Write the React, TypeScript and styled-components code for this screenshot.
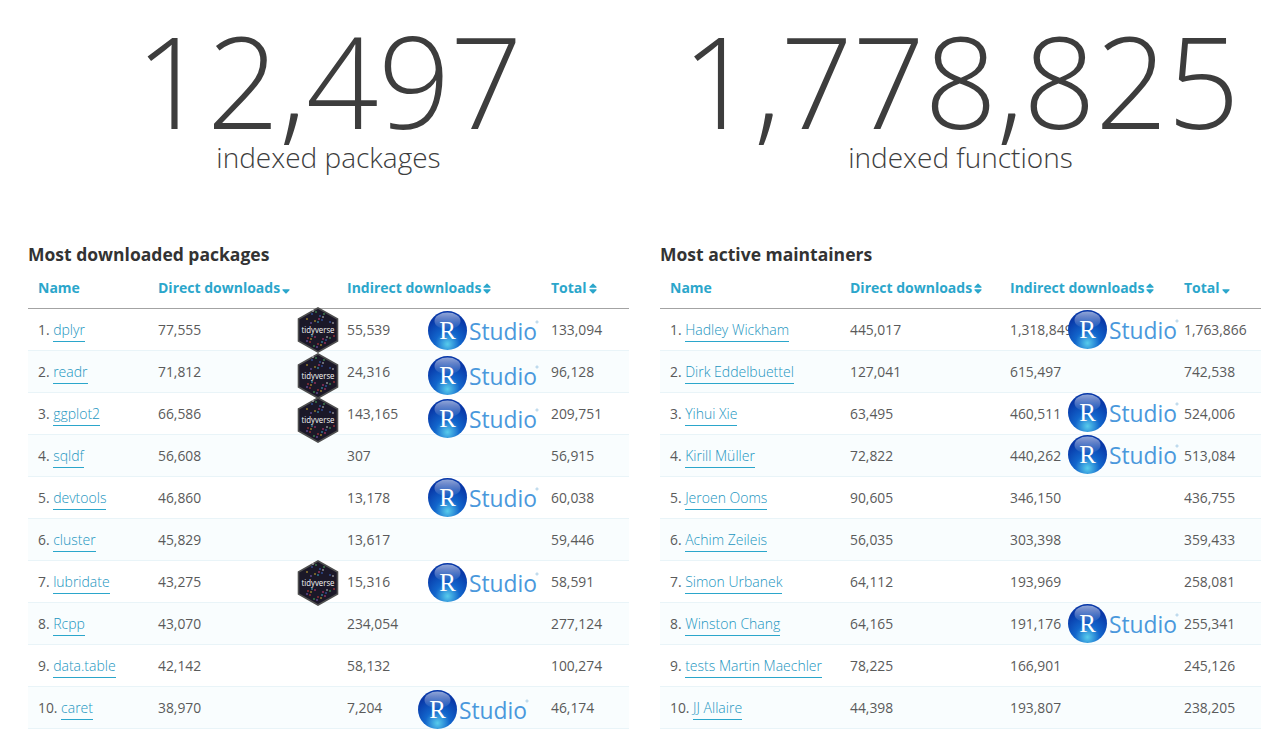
import React from "react";
import styled, {createGlobalStyle} from "styled-components";
import {FaSort, FaSortDown} from "react-icons/fa";

const GlobalStyle = createGlobalStyle`
  body {
    margin: 0;
    background: #fff;
    font-family: "Open Sans", "Liberation Sans", sans-serif;
    color: #555;
  }
`

const Page = styled.div`
  width: 1269px;
  height: 735px;
  overflow: hidden;
  padding: 0 8px 0 28px;
  box-sizing: border-box;
`

const Columns = styled.div`
  display: grid;
  grid-template-columns: 601px 601px;
  column-gap: 31px;
`

const Stat = styled.div`
  height: 242px;
  text-align: center;
  color: #3d3d3d;
  font-weight: 300;
`

const Big = styled.div`
  font-size: 127px;
  line-height: 127px;
  padding-top: 16px;
  letter-spacing: -.5px;
`

const Caption = styled.div`
  font-size: 28px;
  line-height: 38px;
  margin-top: -5px;
`

const Title = styled.h2`
  margin: 0 0 8px;
  font-size: 17.5px;
  line-height: 24px;
  font-weight: 700;
  color: #333;
`

const Table = styled.table`
  width: 601px;
  table-layout: fixed;
  border-collapse: collapse;
  font-size: 14px;
`

const Col = styled.col<{ $w: number }>`
  width: ${p => p.$w}px;
`

const Th = styled.th`
  height: 34px;
  padding: 4px 0 0 10px;
  box-sizing: border-box;
  text-align: left;
  font-size: 14px;
  font-weight: 700;
  color: #2ba6cb;
  border-bottom: 1px solid #a3a3a3;
  white-space: nowrap;
  vertical-align: top;

  svg {
    width: 10px;
    height: 13px;
    margin-left: 1px;
    vertical-align: -2px;
  }
`

const Row = styled.tr<{ $even: boolean }>`
  height: 42px;
  background: ${p => p.$even ? "#f9fdfe" : "#fff"};
  border-bottom: 1px solid #e9f4f8;
`

const Td = styled.td`
  position: relative;
  padding: 0 0 0 10px;
  font-size: 13.85px;
  white-space: nowrap;
  color: #5a5a5a;
`

const PackageLink = styled.a`
  color: #2295c0;
  font-size: 14px;
  font-weight: 300;
  text-decoration: none;
  border-bottom: 1px solid #2ba6cb;
  padding-bottom: 2px;
`

const Overlay = styled.svg<{ $left: number, $top: number }>`
  position: absolute;
  left: ${p => p.$left}px;
  top: ${p => p.$top}px;
  z-index: 1;
`

const RStudio = ({left, top}: { left: number, top: number }) => (
    <Overlay $left={left} $top={top} width="112" height="40" viewBox="0 0 112 40">
        <defs>
            <radialGradient id="ball" cx="50%" cy="85%" r="70%">
                <stop offset="0" stopColor="#58ccec"/>
                <stop offset=".45" stopColor="#1266cc"/>
                <stop offset="1" stopColor="#0838a8"/>
            </radialGradient>
            <linearGradient id="shine" x1="0" y1="0" x2="0" y2="1">
                <stop offset="0" stopColor="#fff" stopOpacity=".55"/>
                <stop offset="1" stopColor="#fff" stopOpacity=".02"/>
            </linearGradient>
        </defs>
        <circle cx="19.5" cy="19.5" r="19.5" fill="url(#ball)"/>
        <ellipse cx="19.5" cy="10" rx="13" ry="8.5" fill="url(#shine)"/>
        <text x="19.5" y="28" textAnchor="middle" fontFamily="Liberation Serif" fontSize="25" fill="#fff">R</text>
        <text x="41" y="29" fontFamily="Open Sans" fontSize="24" textLength="68" lengthAdjust="spacingAndGlyphs" fill="#4a98dc">Studio</text>
        <circle cx="109" cy="11" r="1.1" fill="none" stroke="#8fbfe0" strokeWidth=".7"/>
    </Overlay>
)

const hexColours = ["#e2407f", "#3fb6dd", "#e6c02f", "#e23f3f", "#8a66d0", "#4fc065", "#d8d8d8", "#3f70d8"]

// fixed scatter of coloured specks
const specks = Array.from({length: 70}, (_, i) => {
    const x = 4 + (i * 37) % 34
    const y = 4 + (i * 23) % 38
    return {x, y, c: hexColours[i % hexColours.length]}
}).filter(({x, y}) => Math.abs(x - 21) / 19 + Math.abs(y - 23) / 22 < 1.15 && (y < 17 || y > 28))

const Tidyverse = ({left, top}: { left: number, top: number }) => (
    <Overlay $left={left} $top={top} width="42" height="46" viewBox="0 0 42 46">
        <polygon points="21,1 40.5,12 40.5,34 21,45 1.5,34 1.5,12" fill="#1b1828" stroke="#4e4e4e" strokeWidth="1.6"/>
        {specks.map(({x, y, c}, i) => <circle key={i} cx={x} cy={y} r=".8" fill={c}/>)}
        <text x="21" y="26" textAnchor="middle" fontFamily="Open Sans" fontSize="9" textLength="33" lengthAdjust="spacingAndGlyphs" fill="#f6f6f6">tidyverse</text>
    </Overlay>
)

interface IEntry {
    name: string,
    direct: string,
    indirect: string,
    total: string,
    hexTop?: number,
    logo?: [number, number],
}

const packages: IEntry[] = [
    {name: "dplyr", direct: "77,555", indirect: "55,539", total: "133,094", hexTop: -2, logo: [91, 2]},
    {name: "readr", direct: "71,812", indirect: "24,316", total: "96,128", hexTop: 2, logo: [91, 5]},
    {name: "ggplot2", direct: "66,586", indirect: "143,165", total: "209,751", hexTop: 4, logo: [91, 6]},
    {name: "sqldf", direct: "56,608", indirect: "307", total: "56,915"},
    {name: "devtools", direct: "46,860", indirect: "13,178", total: "60,038", logo: [91, 1]},
    {name: "cluster", direct: "45,829", indirect: "13,617", total: "59,446"},
    {name: "lubridate", direct: "43,275", indirect: "15,316", total: "58,591", hexTop: -1, logo: [91, 2]},
    {name: "Rcpp", direct: "43,070", indirect: "234,054", total: "277,124"},
    {name: "data.table", direct: "42,142", indirect: "58,132", total: "100,274"},
    {name: "caret", direct: "38,970", indirect: "7,204", total: "46,174", logo: [81, 3]},
]

const maintainers: IEntry[] = [
    {name: "Hadley Wickham", direct: "445,017", indirect: "1,318,849", total: "1,763,866", logo: [68, 1]},
    {name: "Dirk Eddelbuettel", direct: "127,041", indirect: "615,497", total: "742,538"},
    {name: "Yihui Xie", direct: "63,495", indirect: "460,511", total: "524,006", logo: [68, 0]},
    {name: "Kirill Müller", direct: "72,822", indirect: "440,262", total: "513,084", logo: [68, 0]},
    {name: "Jeroen Ooms", direct: "90,605", indirect: "346,150", total: "436,755"},
    {name: "Achim Zeileis", direct: "56,035", indirect: "303,398", total: "359,433"},
    {name: "Simon Urbanek", direct: "64,112", indirect: "193,969", total: "258,081"},
    {name: "Winston Chang", direct: "64,165", indirect: "191,176", total: "255,341", logo: [68, 1]},
    {name: "tests Martin Maechler", direct: "78,225", indirect: "166,901", total: "245,126"},
    {name: "JJ Allaire", direct: "44,398", indirect: "193,807", total: "238,205"},
]

interface ITableProps {
    title: string,
    widths: number[],
    sorted: "direct" | "total",
    rows: IEntry[],
}

const Ranking = ({title, widths, sorted, rows}: ITableProps) => (
    <div>
        <Title>{title}</Title>
        <Table>
            <colgroup>
                {widths.map((w, i) => <Col key={i} $w={w}/>)}
            </colgroup>
            <thead>
            <tr>
                <Th>Name</Th>
                <Th>Direct downloads{sorted === "direct" ? <FaSortDown/> : <FaSort/>}</Th>
                <Th>Indirect downloads<FaSort/></Th>
                <Th>Total{sorted === "total" ? <FaSortDown/> : <FaSort/>}</Th>
            </tr>
            </thead>
            <tbody>
            {rows.map((row, i) => (
                <Row key={row.name} $even={i % 2 === 1}>
                    <Td>{i + 1}. <PackageLink href="#">{row.name}</PackageLink></Td>
                    <Td>
                        {row.direct}
                        {row.hexTop !== undefined && <Tidyverse left={149} top={row.hexTop}/>}
                    </Td>
                    <Td>
                        {row.indirect}
                        {row.logo && <RStudio left={row.logo[0]} top={row.logo[1]}/>}
                    </Td>
                    <Td>{row.total}</Td>
                </Row>
            ))}
            </tbody>
        </Table>
    </div>
)

export default function App() {
    return (
        <Page>
            <GlobalStyle/>
            <Columns>
                <Stat>
                    <Big>12,497</Big>
                    <Caption>indexed packages</Caption>
                </Stat>
                <Stat>
                    <Big>1,778,825</Big>
                    <Caption>indexed functions</Caption>
                </Stat>
                <Ranking title="Most downloaded packages" widths={[120, 189, 204, 88]} sorted="direct" rows={packages}/>
                <Ranking title="Most active maintainers" widths={[180, 160, 174, 87]} sorted="total" rows={maintainers}/>
            </Columns>
        </Page>
    )
}
